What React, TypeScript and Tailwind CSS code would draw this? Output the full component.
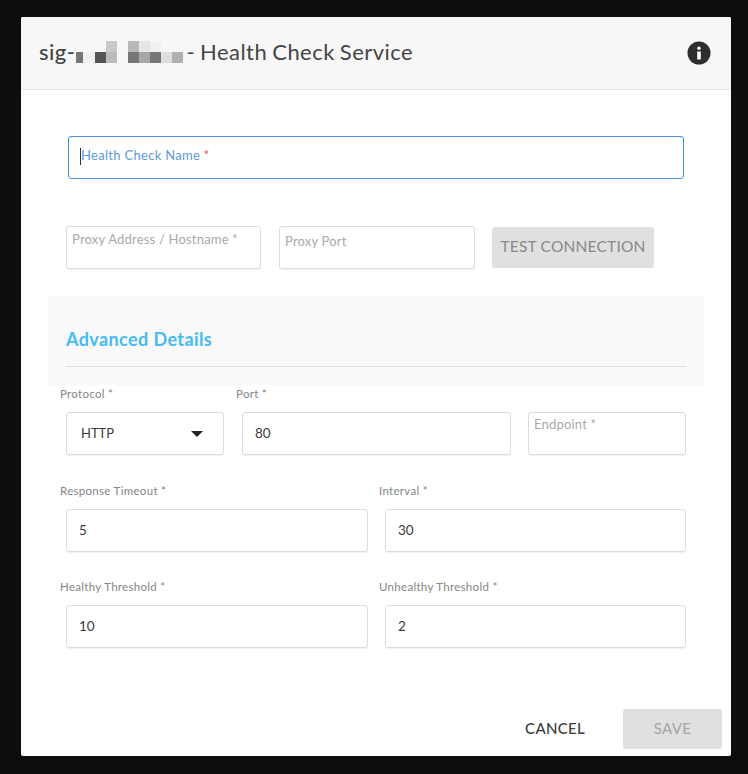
const font = "font-['Lato','Liberation_Sans',sans-serif]";

const row2 = [
  { w: "w-[7px]", bg: "bg-[#777777]" },
  { w: "w-[12px]", bg: "bg-[#f0f0f0]" },
  { w: "w-[11px]", bg: "bg-[#555555]" },
  { w: "w-[11px]", bg: "bg-[#bbbbbb]" },
];
const row3 = ["bg-[#b8b8b8]", "bg-[#e6e6e6]", "bg-[#f1f1f1]", "bg-transparent", "bg-transparent"];
const row4 = ["bg-[#777777]", "bg-[#a8a8a8]", "bg-[#777777]", "bg-[#dedede]", "bg-[#b0b0b0]"];

function Redacted() {
  return (
    <span className="flex items-start h-[22px] ml-[1px] mr-[3px]">
      <span className="flex flex-col w-[41px]">
        <span className="flex justify-end h-[11px]">
          <span className="w-[11px] bg-[#c9c9c9]" />
        </span>
        <span className="flex h-[11px]">
          {row2.map((c, i) => (
            <span key={i} className={`${c.w} ${c.bg}`} />
          ))}
        </span>
      </span>
      <span className="flex flex-col w-[55px] ml-[11px]">
        <span className="flex h-[11px]">
          {row3.map((c, i) => (
            <span key={i} className={`w-[11px] ${c}`} />
          ))}
        </span>
        <span className="flex h-[11px]">
          {row4.map((c, i) => (
            <span key={i} className={`w-[11px] ${c}`} />
          ))}
        </span>
      </span>
    </span>
  );
}

function InfoIcon() {
  return (
    <svg width="24" height="24" viewBox="0 0 24 24">
      <circle cx="12" cy="12" r="11.5" fill="#2e2e2e" />
      <circle cx="12" cy="7.2" r="1.7" fill="#ffffff" />
      <rect x="10.2" y="10.4" width="3.6" height="8" rx="0.4" fill="#ffffff" />
    </svg>
  );
}

function Box({ className = "", value, hint }: { className?: string; value?: string; hint?: string }) {
  return (
    <div className={`h-[43px] bg-white border border-[#dcdcdc] rounded-[3px] shadow-[0_1px_1px_rgba(0,0,0,0.06)] ${className}`}>
      {value && <div className="pl-[12px] pt-[11px] text-[13.5px] leading-[18px] text-[#3a3a3a]">{value}</div>}
      {hint && <div className="pl-[5px] pt-[4px] text-[13px] leading-[16px] tracking-[0.2px] text-[#a9a9a9]">{hint}</div>}
    </div>
  );
}

function Field({ label, value, className = "" }: { label: string; value: string; className?: string }) {
  return (
    <div className={className}>
      <div className="-ml-[6px] h-[25px] text-[11.5px] leading-[14px] tracking-[0.3px] text-[#858585]">{label}</div>
      <Box value={value} />
    </div>
  );
}

export default function App() {
  return (
    <div className={`${font} w-[748px] h-[774px] bg-[#0d0d0d] pt-[17px] pl-[21px] overflow-hidden`}>
      <div className="w-[710px] h-[739px] bg-white rounded-[2px] flex flex-col">
        <header className="h-[73px] shrink-0 bg-[#f7f7f7] border-b border-[#e6e6e6] flex items-center pl-[18px] pr-[20px] rounded-t-[2px]">
          <h1 className="flex items-center text-[22px] leading-[24px] text-[#454545] tracking-[0.45px] pb-[3px]">
            <span className="font-medium">sig-</span>
            <Redacted />
            <span className="[word-spacing:-1px]">- Health Check Service</span>
          </h1>
          <div className="ml-auto">
            <InfoIcon />
          </div>
        </header>

        <div className="flex-1 flex flex-col pt-[46px] pl-[45px] pr-[45px]">
          <div className="relative ml-[2px] w-[616px] h-[43px] border border-[#4a90e2] rounded-[3px] pl-[12px] pt-[10px] text-[13px] leading-[16px] tracking-[0.3px] text-[#5b9bdc]">
            <span className="absolute left-[11px] top-[11px] w-px h-[17px] bg-[#333333]" />
            Health Check Name <span className="text-[#e8604c]">*</span>
          </div>

          <div className="flex items-start mt-[47px]">
            <Box className="w-[195px]" hint="Proxy Address / Hostname *" />
            <Box className="w-[196px] ml-[18px] [&>div]:pt-[6px]" hint="Proxy Port" />
            <button className="w-[162px] h-[41px] ml-[17px] mt-px pb-[2px] bg-[#e0e0e0] rounded-[3px] text-[15.5px] tracking-[0.2px] text-[#888888]">
              TEST CONNECTION
            </button>
          </div>

          <section className="-ml-[18px] mt-[27px] w-[656px] h-[89px] bg-[#f9f9f9] px-[18px] pt-[32px]">
            <h2 className="text-[18px] leading-[22px] font-bold tracking-[0.4px] text-[#45bcf5]">Advanced Details</h2>
            <div className="mt-[16px] h-px bg-[#dedede]" />
          </section>

          <div className="flex mt-[2px]">
            <div className="w-[158px]">
              <div className="-ml-[6px] h-[25px] text-[11.5px] leading-[14px] tracking-[0.3px] text-[#858585]">Protocol *</div>
              <div className="h-[43px] bg-white border border-[#dcdcdc] rounded-[3px] shadow-[0_1px_1px_rgba(0,0,0,0.06)] flex items-center justify-between pl-[14px] pr-[20px] text-[13px] text-[#3a3a3a]">
                <span className="pt-px">HTTP</span>
                <svg width="12" height="6" viewBox="0 0 12 6">
                  <path d="M0 0h12L6 6z" fill="#222222" />
                </svg>
              </div>
            </div>
            <Field className="w-[269px] ml-[18px]" label="Port *" value="80" />
            <div className="w-[158px] ml-[17px] pt-[25px]">
              <Box className="[&>div]:pt-[3px]" hint="Endpoint *" />
            </div>
          </div>

          <div className="flex gap-[17px] mt-[29px]">
            <Field className="w-[302px]" label="Response Timeout *" value="5" />
            <Field className="w-[301px]" label="Interval *" value="30" />
          </div>

          <div className="flex gap-[17px] mt-[28px]">
            <Field className="w-[302px]" label="Healthy Threshold *" value="10" />
            <Field className="w-[301px]" label="Unhealthy Threshold *" value="2" />
          </div>
        </div>

        <footer className="flex items-center justify-end h-[47px] pb-[7px] pr-[9px]">
          <button className="pb-[2px] text-[15px] font-medium tracking-[0.3px] text-[#3c3c3c] mr-[38px]">CANCEL</button>
          <button className="w-[99px] h-[40px] pb-[2px] bg-[#e0e0e0] rounded-[3px] text-[15px] font-medium tracking-[0.3px] text-[#a8a8a8]">SAVE</button>
        </footer>
      </div>
    </div>
  );
}
